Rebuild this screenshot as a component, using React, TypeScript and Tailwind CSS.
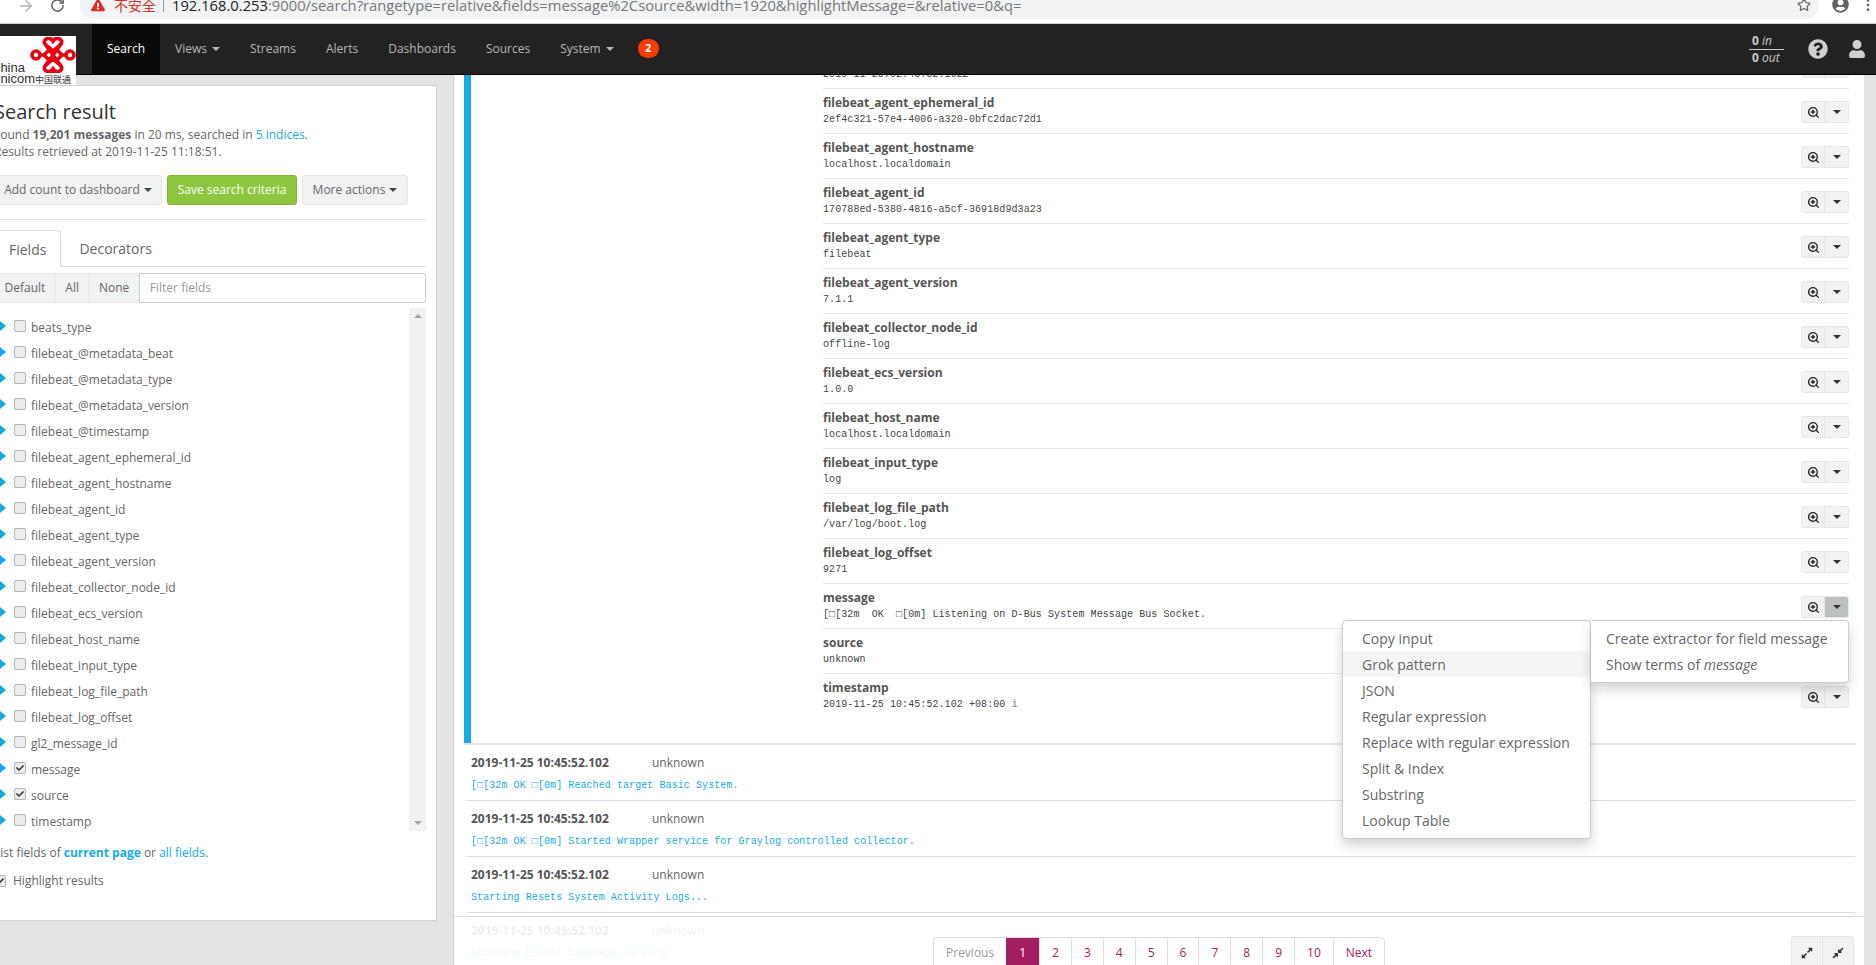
import { ArrowRight, MoreVertical, RotateCw, Star, ZoomIn } from "lucide-react";
import { FaCheck, FaCompressAlt, FaExclamationTriangle, FaExpandAlt, FaQuestionCircle, FaUser, FaUserCircle } from "react-icons/fa";

const navItems = [
  { label: "Views", caret: true },
  { label: "Streams" },
  { label: "Alerts" },
  { label: "Dashboards" },
  { label: "Sources" },
  { label: "System", caret: true },
];

const fields = [
  "beats_type", "filebeat_@metadata_beat", "filebeat_@metadata_type", "filebeat_@metadata_version", "filebeat_@timestamp",
  "filebeat_agent_ephemeral_id", "filebeat_agent_hostname", "filebeat_agent_id", "filebeat_agent_type", "filebeat_agent_version",
  "filebeat_collector_node_id", "filebeat_ecs_version", "filebeat_host_name", "filebeat_input_type", "filebeat_log_file_path",
  "filebeat_log_offset", "gl2_message_id", "message", "source", "timestamp",
];

const details = [
  { name: "filebeat_@timestamp", value: "2019-11-25T02:45:52.102Z" },
  { name: "filebeat_agent_ephemeral_id", value: "2ef4c321-57e4-4006-a320-0bfc2dac72d1" },
  { name: "filebeat_agent_hostname", value: "localhost.localdomain" },
  { name: "filebeat_agent_id", value: "170788ed-5380-4816-a5cf-36918d9d3a23" },
  { name: "filebeat_agent_type", value: "filebeat" },
  { name: "filebeat_agent_version", value: "7.1.1" },
  { name: "filebeat_collector_node_id", value: "offline-log" },
  { name: "filebeat_ecs_version", value: "1.0.0" },
  { name: "filebeat_host_name", value: "localhost.localdomain" },
  { name: "filebeat_input_type", value: "log" },
  { name: "filebeat_log_file_path", value: "/var/log/boot.log" },
  { name: "filebeat_log_offset", value: "9271" },
  { name: "message", value: "[□[32m  OK  □[0m] Listening on D-Bus System Message Bus Socket.", open: true },
  { name: "source", value: "unknown" },
];

const messages = [
  "[□[32m OK □[0m] Reached target Basic System.",
  "[□[32m OK □[0m] Started Wrapper service for Graylog controlled collector.",
  "Starting Resets System Activity Logs...",
  "Starting Kernel Samepage Merging...",
];

const extractors = ["Copy input", "Grok pattern", "JSON", "Regular expression", "Replace with regular expression", "Split & Index", "Substring", "Lookup Table"];

const mono = "font-['Liberation_Mono',monospace] text-[10px] tracking-[0.08px]";

function Caret({ className = "border-t-[#444]" }: { className?: string }) {
  return <span className={`inline-block h-0 w-0 border-x-[4px] border-t-[4px] border-x-transparent ${className}`} />;
}

function Checkbox({ checked }: { checked?: boolean }) {
  return (
    <span className="flex h-[12px] w-[12px] shrink-0 items-center justify-center rounded-[2px] border border-[#b5b5b5] bg-[#ececec]">
      {checked && <FaCheck size={8} className="text-[#333]" />}
    </span>
  );
}

function RowActions({ open }: { open?: boolean }) {
  return (
    <div className="flex h-[22px] w-[48px] shrink-0 overflow-hidden rounded-[3px] border border-[#e6e6e6] bg-[#f1f2f2]">
      <span className="flex w-[23px] items-center justify-center border-r border-[#e6e6e6]">
        <ZoomIn size={13} strokeWidth={2.5} className="text-[#222]" />
      </span>
      <span className={`flex flex-1 items-center justify-center ${open ? "bg-[#bcc0c0]" : ""}`}>
        <Caret className="border-t-[#333]" />
      </span>
    </div>
  );
}

function Logo() {
  return (
    <div className="absolute left-0 top-[36px] z-20 h-[49px] w-[76px] overflow-hidden bg-white">
      <svg viewBox="0 0 46 36" className="absolute left-[30px] top-[1px] h-[36px] w-[46px]" fill="none" stroke="#e60012" strokeWidth="3.6">
        <path d="M23 14L15 7C12 2 20-1 23 4C26-1 34 2 31 7Z" />
        <path d="M23 22L15 29C12 34 20 37 23 32C26 37 34 34 31 29Z" />
        <path d="M15 7L31 29M31 7L15 29" />
        <circle cx="6" cy="18" r="4" />
        <circle cx="40" cy="18" r="4" />
        <path d="M10 18H14L19 13M36 18H32L27 13M14 18L19 23M32 18L27 23" />
      </svg>
      <div className="absolute left-[-9px] top-[27px] font-['Liberation_Sans',sans-serif] text-[13px] leading-[10px] text-[#333]">China</div>
      <div className="absolute left-[-9px] top-[38px] whitespace-nowrap font-['Liberation_Sans','Noto_Sans_CJK_SC',sans-serif] text-[13px] leading-[10px] text-[#333]">
        Unicom<span className="text-[9px]">中国联通</span>
      </div>
    </div>
  );
}

function BrowserBar() {
  return (
    <div className="flex h-[24px] shrink-0 items-start overflow-hidden border-b border-[#cfcfcf] bg-white">
      <ArrowRight size={18} className="ml-[17px] mt-[-3px] shrink-0 text-[#b4b4b4]" />
      <RotateCw size={15} strokeWidth={2.4} className="ml-[15px] mt-[-2px] shrink-0 text-[#5f6368]" />
      <div className="ml-[15px] flex h-[19px] flex-1 items-center overflow-hidden rounded-br-[14px] rounded-bl-[14px] bg-[#f1f3f4] pl-[11px] pr-[8px]">
        <FaExclamationTriangle size={14} className="mt-[-9px] shrink-0 text-[#d93025]" />
        <span className="ml-[9px] mt-[-9px] font-['Noto_Sans_CJK_SC',sans-serif] text-[14px] text-[#d93025]">不安全</span>
        <span className="ml-[7px] mt-[-9px] h-[14px] w-px bg-[#999]" />
        <span className="ml-[8px] mt-[-9px] whitespace-nowrap font-['Open_Sans',sans-serif] text-[14.75px] text-[#777]">
          <span className="text-[#222]">192.168.0.253</span>:9000/search?rangetype=relative&amp;fields=message%2Csource&amp;width=1920&amp;highlightMessage=&amp;relative=0&amp;q=
        </span>
        <Star size={14} className="ml-auto mt-[-9px] shrink-0 text-[#5f6368]" />
      </div>
      <FaUserCircle size={17} className="ml-[13px] mt-[-4px] shrink-0 text-[#5f6368]" />
      <MoreVertical size={16} className="ml-[11px] mr-0 mt-[-3px] shrink-0 text-[#5f6368]" />
    </div>
  );
}

function NavBar() {
  return (
    <div className="flex h-[51px] shrink-0 items-stretch border-b border-black bg-[#222] pl-[92px] text-[12px] text-[#b8b8b8]">
      <div className="flex items-center bg-[#0a0a0a] px-[15px] pb-[1px] text-white">Search</div>
      {navItems.map((item) => (
        <div key={item.label} className="flex items-center gap-[5px] px-[15px] pb-[1px]">
          {item.label}
          {item.caret && <Caret className="border-t-[#b8b8b8]" />}
        </div>
      ))}
      <div className="ml-[9px] mt-[15px] flex h-[19px] w-[21px] items-center justify-center rounded-full bg-[#ff3b00] text-[11px] font-bold text-white">2</div>
      <div className="ml-auto flex items-center">
        <div className="mr-[24px] w-[35px] pl-[3px] text-[12px] leading-[14px] text-[#ccc]">
          <div className="-ml-[3px] border-b border-[#ccc] pl-[3px] pb-px"><b>0</b> <i>in</i></div>
          <div className="pt-px"><b>0</b> <i>out</i></div>
        </div>
        <FaQuestionCircle size={20} className="mr-[20px] text-[#d0d0d0]" />
        <FaUser size={18} className="mr-[10px] text-[#d0d0d0]" />
      </div>
    </div>
  );
}

function Sidebar() {
  return (
    <aside className="w-[453px] shrink-0 overflow-hidden bg-[#e3e3e3] pt-[10px]">
      <div className="-ml-[18px] h-[836px] w-[455px] border-r border-b border-t border-[#d1d1d1] bg-white pl-[12px] pr-[10px] pt-[12px] text-[12px] text-[#666]">
        <h1 className="text-[20px] leading-[28px] text-[#333]">Search result</h1>
        <p className="leading-[17px]">
          Found <b>19,201 messages</b> in 20 ms, searched in <span className="text-[#16ace3]">5 indices</span>.
        </p>
        <p className="leading-[17px]">Results retrieved at 2019-11-25 11:18:51.</p>

        <div className="mt-[15px] flex h-[30px] gap-[5px]">
          <button className="flex w-[168px] items-center justify-center gap-[4px] rounded-[3px] border border-[#e6e6e6] bg-[#f1f2f2]">
            Add count to dashboard <Caret />
          </button>
          <button className="w-[130px] rounded-[3px] border border-[#7fb534] bg-[#8dc63f] text-white">Save search criteria</button>
          <button className="flex w-[106px] items-center justify-center gap-[4px] rounded-[3px] border border-[#e6e6e6] bg-[#f1f2f2]">
            More actions <Caret />
          </button>
        </div>
        <hr className="mt-[14px] border-[#e5e5e5]" />

        <div className="mt-[10px] flex h-[37px] gap-[4px] border-b border-[#ddd] text-[14px]">
          <div className="h-[37px] rounded-t-[3px] border border-b-0 border-[#ddd] bg-white px-[14px] leading-[37px]">Fields</div>
          <div className="px-[14px] leading-[38px]">Decorators</div>
        </div>

        <div className="mt-[6px] flex h-[30px]">
          {["Default", "All", "None"].map((label) => (
            <div key={label} className="flex items-center border border-r-0 border-[#e6e6e6] bg-[#f1f2f2] px-[9.5px]">{label}</div>
          ))}
          <div className="flex flex-1 items-center rounded-r-[3px] border border-[#ccc] bg-white pl-[10px] text-[#999]">Filter fields</div>
        </div>

        <div className="mt-[5px] flex h-[523px]">
          <ul className="flex-1 pt-[7px]">
            {fields.map((name) => (
              <li key={name} className="flex h-[26px] items-center">
                <span className="-mt-[4px] ml-[6px] h-0 w-0 border-y-[5px] border-l-[6px] border-y-transparent border-l-[#16ace3]" />
                <span className="-mt-[4px] ml-[8px]"><Checkbox checked={name === "message" || name === "source"} /></span>
                <span className="ml-[5px]">{name}</span>
              </li>
            ))}
          </ul>
          <div className="flex w-[17px] flex-col items-center justify-between bg-[#f1f1f1] py-[6px]">
            <span className="h-0 w-0 border-x-[4px] border-b-[4px] border-x-transparent border-b-[#a3a3a3]" />
            <span className="h-0 w-0 border-x-[4px] border-t-[4px] border-x-transparent border-t-[#a3a3a3]" />
          </div>
        </div>

        <p className="mt-[13px] leading-[17px]">
          List fields of <b className="text-[#16ace3]">current page</b> or <span className="text-[#16ace3]">all fields</span>.
        </p>
        <div className="mt-[11px] flex items-center gap-[7px] leading-[17px]">
          <Checkbox checked />
          Highlight results
        </div>
      </div>
    </aside>
  );
}

function MessageDetails() {
  return (
    <div className="ml-[10px] mr-[9px] flex h-[701px] border-b-2 border-[#e3e3e3]">
      <div className="w-[7px] shrink-0 bg-[#16ace3]" />
      <div className="ml-[352px] mr-[6px] flex-1">
        {details.map((d) => (
          <div key={d.name} className="flex h-[45px] items-start justify-between border-b border-[#e8e8e8] pt-[5px]">
            <div>
              <div className="font-bold leading-[17px] text-[#555]">{d.name}</div>
              <div className={`${mono} whitespace-pre leading-[17px] text-[#444]`}>{d.value}</div>
            </div>
            <div className="mt-[7px]"><RowActions open={d.open} /></div>
          </div>
        ))}
        <div className="flex items-start justify-between pt-[5px]">
          <div>
            <div className="font-bold leading-[17px] text-[#555]">timestamp</div>
            <div className={`${mono} whitespace-pre leading-[17px] text-[#444]`}>2019-11-25 10:45:52.102 +08:00 <b className="text-[#999]">i</b></div>
          </div>
          <div className="mt-[7px]"><RowActions /></div>
        </div>
      </div>
    </div>
  );
}

function ExtractorMenu() {
  return (
    <div className="absolute left-[888px] top-[545px] z-10 flex items-start text-[14px] text-[#666]">
      <ul className="h-[219px] w-[249px] rounded-[4px] border border-[#ccc] bg-white py-[4px] shadow-[0_6px_12px_rgba(0,0,0,0.175)]">
        {extractors.map((item) => (
          <li key={item} className={`flex h-[26px] items-center pl-[19px] ${item === "Grok pattern" ? "bg-[#f5f5f5]" : ""}`}>{item}</li>
        ))}
      </ul>
      <ul className="h-[63px] w-[258px] rounded-r-[4px] border border-l-0 border-[#ccc] bg-white py-[4px] shadow-[0_6px_12px_rgba(0,0,0,0.175)]">
        <li className="flex h-[26px] items-center pl-[15px]">Create extractor for field message</li>
        <li className="flex h-[26px] items-center pl-[15px]"><span className="whitespace-pre">Show terms of <i>message</i></span></li>
      </ul>
    </div>
  );
}

function BottomBar() {
  const pages = ["1", "2", "3", "4", "5", "6", "7", "8", "9", "10"];
  return (
    <div className="absolute inset-x-0 bottom-0 z-[5] flex h-[49px] justify-between overflow-hidden border-t border-[#ddd] bg-white/90 pl-[479px] pr-[10px] pt-[20px]">
      <div className="flex h-[34px] rounded-t-[4px] border border-[#ddd] bg-white leading-[30px] text-[#a6195f]">
        <span className="px-[12px] text-[#999]">Previous</span>
        {pages.map((p) => (
          <span key={p} className={p === "1" ? "bg-[#a31d63] px-[13px] text-white" : "border-l border-[#ddd] px-[12px]"}>{p}</span>
        ))}
        <span className="border-l border-[#ddd] px-[12px]">Next</span>
      </div>
      <div className="-mt-px flex h-[34px] w-[63px] rounded-t-[3px] border border-[#e6e6e6] bg-[#f1f2f2] text-[#333]">
        <span className="flex flex-1 items-center justify-center border-r border-[#e6e6e6]"><FaExpandAlt size={12} /></span>
        <span className="flex flex-1 items-center justify-center"><FaCompressAlt size={12} /></span>
      </div>
    </div>
  );
}

export default function App() {
  return (
    <div className="relative flex h-screen flex-col overflow-hidden bg-[#e3e3e3] font-['Open_Sans',sans-serif] text-[12px]">
      <BrowserBar />
      <NavBar />
      <Logo />
      <div className="flex min-h-0 flex-1">
        <Sidebar />
        <main className="relative mr-[12px] min-w-0 flex-1 overflow-hidden border-l border-[#d1d1d1] bg-white text-[#666]">
          <div className="-mt-[31px]">
            <MessageDetails />
            <div className="ml-[13px] mr-[9px]">
              {messages.map((m) => (
                <div key={m} className="h-[56px] border-b border-[#ddd] pl-[4px] pt-[9px]">
                  <div className="leading-[17px]">
                    <b className="inline-block w-[181px] text-[#555]">2019-11-25 10:45:52.102</b>
                    unknown
                  </div>
                  <div className={`${mono} mt-[6px] whitespace-pre leading-[17px] text-[#16ace3]`}>{m}</div>
                </div>
              ))}
            </div>
          </div>
          <ExtractorMenu />
          <BottomBar />
        </main>
      </div>
    </div>
  );
}
